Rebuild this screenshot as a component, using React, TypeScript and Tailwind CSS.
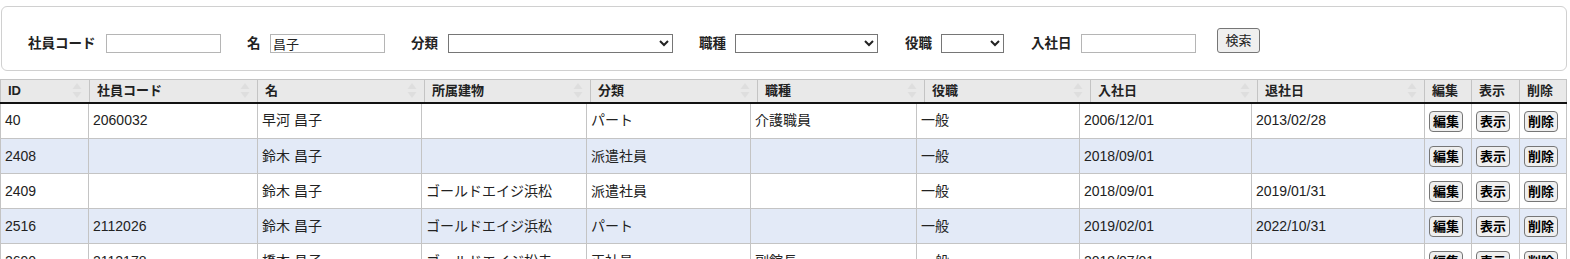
import React from 'react';

type Row = {
  id: string;
  code: string;
  name: string;
  building: string;
  kind: string;
  job: string;
  post: string;
  joined: string;
  left: string;
};

const rows: Row[] = [
  { id: '40', code: '2060032', name: '早河 昌子', building: '', kind: 'パート', job: '介護職員', post: '一般', joined: '2006/12/01', left: '2013/02/28' },
  { id: '2408', code: '', name: '鈴木 昌子', building: '', kind: '派遣社員', job: '', post: '一般', joined: '2018/09/01', left: '' },
  { id: '2409', code: '', name: '鈴木 昌子', building: 'ゴールドエイジ浜松', kind: '派遣社員', job: '', post: '一般', joined: '2018/09/01', left: '2019/01/31' },
  { id: '2516', code: '2112026', name: '鈴木 昌子', building: 'ゴールドエイジ浜松', kind: 'パート', job: '', post: '一般', joined: '2019/02/01', left: '2022/10/31' },
  { id: '2690', code: '2112178', name: '橋本 昌子', building: 'ゴールドエイジ松寺', kind: '正社員', job: '副館長', post: '一般', joined: '2019/07/01', left: '' },
];

const headWidths = ['w-[89px]', 'w-[168px]', 'w-[167px]', 'w-[166px]', 'w-[167px]', 'w-[167px]', 'w-[166px]', 'w-[167px]', 'w-[167px]', 'w-[47px]', 'w-[48px]', 'w-[47px]'];
const bodyWidths = ['w-[88px]', 'w-[169px]', 'w-[164px]', 'w-[165px]', 'w-[164px]', 'w-[166px]', 'w-[163px]', 'w-[172px]', 'w-[173px]', 'w-[47px]', 'w-[48px]', 'w-[47px]'];

const headers = ['ID', '社員コード', '名', '所属建物', '分類', '職種', '役職', '入社日', '退社日', '編集', '表示', '削除'];

const SortIcon = () => (
  <svg width="10" height="17" viewBox="0 0 10 17" className="shrink-0">
    <path d="M5 1 L9.5 7 L0.5 7 Z" fill="#dedede" />
    <path d="M5 16 L9.5 10 L0.5 10 Z" fill="#dedede" />
  </svg>
);

const RowButton = ({ label }: { label: string }) => (
  <button className="h-[21px] px-[3px] rounded-[4px] border border-[#767676] bg-[#efefef] text-[13px] font-semibold leading-[19px] text-black">
    {label}
  </button>
);

const Field = ({ label, labelW, children, ml }: { label: string; labelW: string; children: React.ReactNode; ml: string }) => (
  <div className={`flex items-end ${ml}`}>
    <span className={`${labelW} h-[19px] leading-[19px] text-[13.5px] font-bold text-[#222]`}>{label}</span>
    {children}
  </div>
);

export default function App() {
  return (
    <div className="w-[1570px] bg-white font-['Liberation_Sans','Noto_Sans_CJK_JP',sans-serif] text-[#222] pt-[6px]">
      {/* search panel */}
      <div className="ml-[1px] w-[1566px] h-[65px] border border-[#d0d0d0] rounded-[6px] flex items-end pl-[26px] pb-[17px]">
        <Field label="社員コード" labelW="w-[78px]" ml="">
          <input className="w-[115px] h-[19px] border border-[#b5b5b5] bg-white px-[2px] text-[13px]" />
        </Field>
        <Field label="名" labelW="w-[23px]" ml="ml-[26px]">
          <input defaultValue="昌子" className="w-[115px] h-[19px] border border-[#b5b5b5] bg-white px-[2px] text-[13px] leading-[17px]" />
        </Field>
        <Field label="分類" labelW="w-[37px]" ml="ml-[26px]">
          <select className="w-[225px] h-[19px] border border-[#767676] bg-white text-[13px]">
            <option></option>
          </select>
        </Field>
        <Field label="職種" labelW="w-[36px]" ml="ml-[26px]">
          <select className="w-[143px] h-[19px] border border-[#767676] bg-white text-[13px]">
            <option></option>
          </select>
        </Field>
        <Field label="役職" labelW="w-[36px]" ml="ml-[27px]">
          <select className="w-[63px] h-[19px] border border-[#767676] bg-white text-[13px]">
            <option></option>
          </select>
        </Field>
        <Field label="入社日" labelW="w-[50px]" ml="ml-[27px]">
          <input className="w-[115px] h-[19px] border border-[#b5b5b5] bg-white px-[2px] text-[13px]" />
        </Field>
        <button className="ml-[21px] w-[43px] h-[25px] border border-[#767676] rounded-[3px] bg-[#efefef] text-[13px] text-[#222]">
          検索
        </button>
      </div>

      {/* list */}
      <div className="mt-[8px] w-[1567px] border-r border-[#c4c4c4]">
        <table className="table-fixed border-collapse w-[1566px]">
          <colgroup>
            {headWidths.map((w, i) => (
              <col key={i} className={w} />
            ))}
          </colgroup>
          <thead>
            <tr className="bg-[#e9e9e9]">
              {headers.map((h, i) => (
                <th key={h} className="h-[23px] p-0 border border-[#c4c4c4] border-b-2 border-b-[#111] text-left font-bold text-[13px] text-[#222]">
                  <div className="flex items-center justify-between pl-[7px] pr-[7px]">
                    <span>{h}</span>
                    {i < 9 && <SortIcon />}
                  </div>
                </th>
              ))}
            </tr>
          </thead>
        </table>
        <table className="table-fixed border-collapse w-[1566px]">
          <colgroup>
            {bodyWidths.map((w, i) => (
              <col key={i} className={w} />
            ))}
          </colgroup>
          <tbody>
            {rows.map((r, i) => (
              <tr key={r.id} className={i % 2 === 1 ? 'bg-[#e3eaf7]' : 'bg-white'}>
                {[r.id, r.code, r.name, r.building, r.kind, r.job, r.post, r.joined, r.left].map((v, j) => (
                  <td key={j} className="h-[35px] px-[4px] py-0 border border-t-0 border-[#c4c4c4] text-[14px] text-[#222] align-middle whitespace-nowrap overflow-hidden">
                    {v}
                  </td>
                ))}
                <td className="px-[4px] py-0 border border-t-0 border-[#c4c4c4] align-middle">
                  <RowButton label="編集" />
                </td>
                <td className="px-[4px] py-0 border border-t-0 border-[#c4c4c4] align-middle">
                  <RowButton label="表示" />
                </td>
                <td className="px-[4px] py-0 border border-t-0 border-[#c4c4c4] align-middle">
                  <RowButton label="削除" />
                </td>
              </tr>
            ))}
          </tbody>
        </table>
      </div>
    </div>
  );
}
